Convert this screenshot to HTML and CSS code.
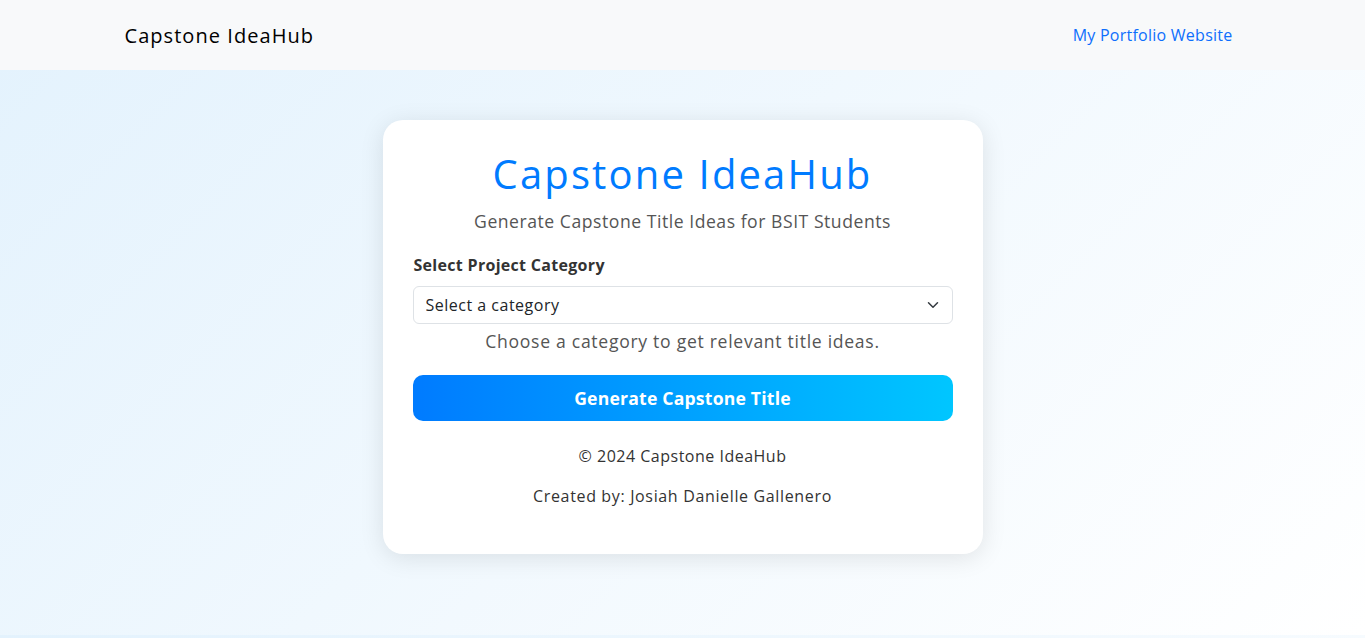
FILE: index.html
```html
<!DOCTYPE html>
<html lang="en">
<head>
<meta charset="utf-8">
<title>Capstone IdeaHub</title>
<link rel="stylesheet" href="styles.css">
</head>
<body>
<nav class="navbar">
  <div class="container nav-inner">
    <a class="brand" href="#">Capstone IdeaHub</a>
    <a class="nav-link" href="#">My Portfolio Website</a>
  </div>
</nav>
<main class="main">
  <div class="card">
    <h1 class="title">Capstone IdeaHub</h1>
    <p class="subtitle">Generate Capstone Title Ideas for BSIT Students</p>
    <label class="label" for="cat">Select Project Category</label>
    <div class="select-wrap">
      <select id="cat" class="select">
        <option>Select a category</option>
      </select>
      <svg class="chev" width="16" height="16" viewBox="0 0 16 16"><path d="M2 5l6 6 6-6" fill="none" stroke="#343a40" stroke-width="2" stroke-linecap="round" stroke-linejoin="round"/></svg>
    </div>
    <p class="help">Choose a category to get relevant title ideas.</p>
    <button class="btn">Generate Capstone Title</button>
    <p class="foot foot-1">© 2024 Capstone IdeaHub</p>
    <p class="foot foot-2">Created by: Josiah Danielle Gallenero</p>
  </div>
</main>
</body>
</html>
```
FILE: styles.css
```css
* { box-sizing: border-box; }
html, body { margin: 0; }
body {
  font-family: "Open Sans", "DejaVu Sans", sans-serif;
  background: linear-gradient(135deg, #e3f2fd 0%, #ffffff 100%);
  color: #212529;
}
.navbar {
  background: #f8f9fa;
  height: 70px;
  display: flex;
  align-items: center;
}
.container {
  width: 1140px;
  margin: 0 auto;
  padding: 0 12px;
}
.nav-inner {
  display: flex;
  justify-content: space-between;
  align-items: center;
}
.brand {
  font-size: 20px;
  letter-spacing: 1.05px;
  color: #000;
  text-decoration: none;
}
.nav-link {
  font-size: 16px;
  letter-spacing: 0.25px;
  color: #0d6efd;
  text-decoration: none;
  margin-right: 8px;
}
.main {
  padding: 50px 0 81px;
  display: flex;
  justify-content: center;
}
.card {
  width: 600px;
  background: #fff;
  border-radius: 20px;
  box-shadow: 0 4px 24px rgba(0, 0, 0, 0.1);
  padding: 30px 30px 46px;
  display: flex;
  flex-direction: column;
}
.title {
  margin: 0;
  font-size: 40px;
  font-weight: 400;
  line-height: 48px;
  color: #007bff;
  text-align: center;
  letter-spacing: 2.15px;
}
.subtitle {
  margin: 10px 0 0;
  font-size: 17.6px;
  line-height: 26px;
  color: #555;
  text-align: center;
  letter-spacing: 0.53px;
}
.label {
  margin-top: 19px;
  padding-left: 1px;
  font-size: 16px;
  line-height: 24px;
  font-weight: 700;
  color: #333;
  letter-spacing: 0.3px;
}
.select-wrap {
  position: relative;
  margin-top: 9px;
}
.select {
  appearance: none;
  -webkit-appearance: none;
  width: 100%;
  height: 38px;
  border: 1px solid #dee2e6;
  border-radius: 6px;
  background: #fff;
  padding: 0 36px 0 12px;
  font-family: inherit;
  font-size: 16px;
  color: #212529;
  letter-spacing: 0.5px;
}
.chev {
  position: absolute;
  right: 14px;
  top: 13px;
  width: 12px;
  height: 12px;
}
.help {
  margin: 4px 0 0;
  font-size: 17.6px;
  line-height: 26px;
  color: #555;
  text-align: center;
  letter-spacing: 0.7px;
}
.btn {
  margin-top: 21px;
  height: 46px;
  border: 0;
  border-radius: 10px;
  background: linear-gradient(90deg, #007bff 0%, #00c6ff 100%);
  color: #fff;
  font-family: inherit;
  font-size: 17.6px;
  font-weight: 700;
  letter-spacing: 0.2px;
}
.foot {
  margin: 16px 0 0;
  font-size: 16px;
  line-height: 24px;
  color: #333;
  text-align: center;
  letter-spacing: 0.5px;
}
.foot-1 { margin-top: 23px; }
.foot-2 { letter-spacing: 0.65px; }
```
